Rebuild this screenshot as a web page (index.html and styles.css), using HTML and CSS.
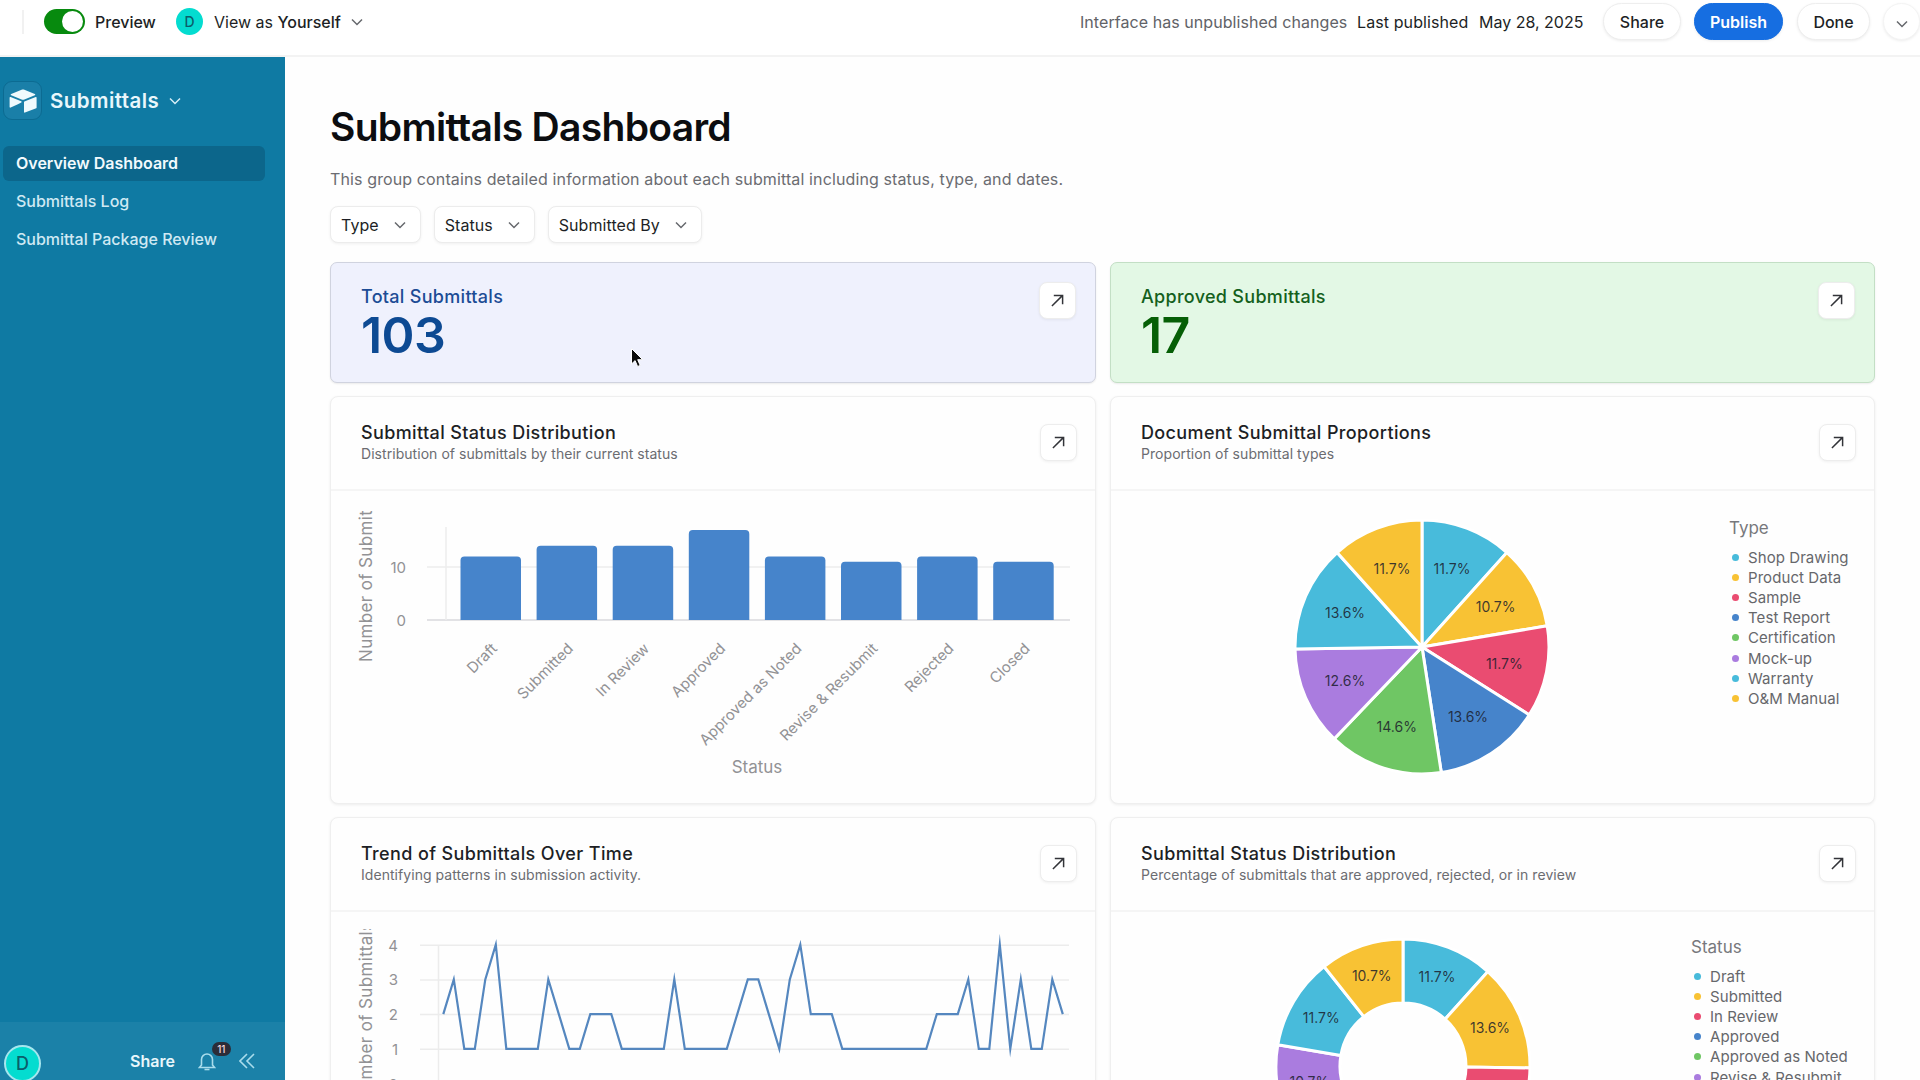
FILE: index.html
```
<!DOCTYPE html>
<html lang="en">
  <head>
    <meta charset="UTF-8" />
    <title>Submittals Dashboard</title>
    <link rel="stylesheet" href="styles.css">
  </head>
  <body>
    <header class="topbar">
      <span class="topbar-divider"></span>
      <span class="toggle"><span class="toggle-knob"></span></span>
      <span class="preview-label">Preview</span>
      <span class="avatar avatar-small">D</span>
      <span class="view-as">View as <b>Yourself</b></span>
      <svg class="chevron view-chevron" viewBox="0 0 12 8"><path d="M1 1.5l5 5 5-5" /></svg>
      <div class="topbar-right">
        <span class="unpublished">Interface has unpublished changes</span>
        <span class="last-published">Last published</span>
        <span class="publish-date">May 28, 2025</span>
        <button class="pill pill-share">Share</button>
        <button class="pill pill-publish">Publish</button>
        <button class="pill pill-done">Done</button>
        <button class="pill pill-more"><svg class="chevron" viewBox="0 0 12 8"><path d="M1 1.5l5 5 5-5" /></svg></button>
      </div>
    </header>

    <div class="layout">
      <aside class="sidebar">
        <div class="app-name">
          <span class="app-logo">
            <svg viewBox="0 0 28 24">
              <path d="M12.6.7L2.2 5c-.6.2-.6 1 0 1.300l10.400 4.100c.9.4 1.900.4 2.800 0l10.400-4.100c.6-.2.6-1 0-1.300L15.400.7c-.9-.4-1.900-.4-2.800 0z" />
              <path d="M15 13v10c0 .5.500.8 1 .6l11.200-4.400c.3-.1.400-.3.400-.6V8.600c0-.5-.5-.8-.9-.6L15.400 12.400c-.2.1-.4.300-.4.600z" />
              <path d="M12.300 13.500L8.900 15.200 1.700 18.600c-.5.2-1.100-.1-1.100-.6V8.600c0-.500.500-.800 1-.6l10.600 4.200c.6.200.6 1 .1 1.300z" />
            </svg>
          </span>
          <span class="app-title">Submittals</span>
          <svg class="chevron" viewBox="0 0 12 8"><path d="M1 1.5l5 5 5-5" /></svg>
        </div>
        <nav class="nav">
          <a class="nav-item active">Overview Dashboard</a>
          <a class="nav-item">Submittals Log</a>
          <a class="nav-item">Submittal Package Review</a>
        </nav>
        <div class="sidebar-footer">
          <span class="avatar avatar-user">D</span>
          <span class="footer-share">Share</span>
          <span class="bell">
            <svg viewBox="0 0 18 20"><path d="M3.500 14V8.500a5.500 5.500 0 0 1 11 0V14l2 2.500h-15z" /><path d="M6.500 18.500h5" /></svg>
            <span class="badge">11</span>
          </span>
          <svg class="collapse" viewBox="0 0 16 16"><path d="M8 1L1 8l7 7M15 1L8 8l7 7" /></svg>
        </div>
      </aside>

      <main class="content">
        <h1 class="title">Submittals Dashboard</h1>
        <p class="description">This group contains detailed information about each submittal including status, type, and dates.</p>

        <div class="filters">
          <button class="filter">Type <svg class="chevron" viewBox="0 0 12 8"><path d="M1 1.5l5 5 5-5" /></svg></button>
          <button class="filter">Status <svg class="chevron" viewBox="0 0 12 8"><path d="M1 1.5l5 5 5-5" /></svg></button>
          <button class="filter">Submitted By <svg class="chevron" viewBox="0 0 12 8"><path d="M1 1.5l5 5 5-5" /></svg></button>
        </div>

        <div class="cards">
          <section class="kpi kpi-blue">
            <div>
              <div class="kpi-label">Total Submittals</div>
              <div class="kpi-value">103</div>
            </div>
            <button class="expand"><svg viewBox="0 0 14 14"><path d="M1 13L12.500 1.500M3 1.500h9.500V11" /></svg></button>
          </section>
          <section class="kpi kpi-green">
            <div>
              <div class="kpi-label">Approved Submittals</div>
              <div class="kpi-value">17</div>
            </div>
            <button class="expand"><svg viewBox="0 0 14 14"><path d="M1 13L12.500 1.500M3 1.500h9.500V11" /></svg></button>
          </section>

          <section class="card">
            <div class="card-header">
              <div>
                <h2>Submittal Status Distribution</h2>
                <p>Distribution of submittals by their current status</p>
              </div>
              <button class="expand"><svg viewBox="0 0 14 14"><path d="M1 13L12.500 1.500M3 1.500h9.500V11" /></svg></button>
            </div>
            <svg class="chart" id="barChart" width="764" height="312"></svg>
          </section>

          <section class="card">
            <div class="card-header">
              <div>
                <h2>Document Submittal Proportions</h2>
                <p>Proportion of submittal types</p>
              </div>
              <button class="expand"><svg viewBox="0 0 14 14"><path d="M1 13L12.500 1.500M3 1.500h9.500V11" /></svg></button>
            </div>
            <div class="pie-body">
              <svg class="pie pie-type" id="typePie" viewBox="-128 -128 256 256"></svg>
              <div class="legend legend-type">
                <h3>Type</h3>
                <ul id="typeLegend"></ul>
              </div>
            </div>
          </section>

          <section class="card">
            <div class="card-header">
              <div>
                <h2>Trend of Submittals Over Time</h2>
                <p>Identifying patterns in submission activity.</p>
              </div>
              <button class="expand"><svg viewBox="0 0 14 14"><path d="M1 13L12.500 1.500M3 1.500h9.500V11" /></svg></button>
            </div>
            <svg class="chart" id="lineChart" width="764" height="312"></svg>
          </section>

          <section class="card">
            <div class="card-header">
              <div>
                <h2>Submittal Status Distribution</h2>
                <p>Percentage of submittals that are approved, rejected, or in review</p>
              </div>
              <button class="expand"><svg viewBox="0 0 14 14"><path d="M1 13L12.500 1.500M3 1.500h9.500V11" /></svg></button>
            </div>
            <div class="pie-body">
              <svg class="pie pie-status" id="statusPie" viewBox="-128 -128 256 256"></svg>
              <div class="legend legend-status">
                <h3>Status</h3>
                <ul id="statusLegend"></ul>
              </div>
            </div>
          </section>
        </div>
      </main>
    </div>

    <svg class="cursor" viewBox="0 0 14 21"><path d="M1.500 1.500v15.500l3.600-3.400 2.500 5.900 2.600-1.100-2.500-5.700h5z" /></svg>

    <script src="charts.js"></script>
  </body>
</html>
```
FILE: styles.css
```
* {
  box-sizing: border-box;
}

body {
  margin: 0;
  height: 1080px;
  overflow: hidden;
  font-family: Inter, "Liberation Sans", sans-serif;
  font-size: 16px;
  color: #1d1f25;
  background-color: #fefefe;
}

button {
  font-family: inherit;
  color: inherit;
}

h1,
h2,
h3,
p,
ul {
  margin: 0;
  padding: 0;
}

.chevron {
  width: 12px;
  height: 8px;
  flex: none;
  fill: none;
  stroke: #66686d;
  stroke-width: 1.5;
}

/* top bar */
.topbar {
  display: flex;
  align-items: center;
  height: 57px;
  padding: 0 0 12px 22px;
  border-bottom: 2px solid #f3f3f3;
  background-color: #fff;
  white-space: nowrap;
}

.topbar-divider {
  width: 2px;
  height: 24px;
  margin-right: 20px;
  background-color: #f1f1f1;
}

.toggle {
  display: flex;
  justify-content: flex-end;
  width: 41px;
  height: 25px;
  padding: 2px;
  border-radius: 13px;
  background-color: #078a0e;
}

.toggle-knob {
  width: 21px;
  height: 21px;
  border-radius: 50%;
  background-color: #fff;
}

.preview-label {
  width: 82px;
  padding-left: 10px;
  font-weight: 500;
}

.avatar {
  display: flex;
  align-items: center;
  justify-content: center;
  flex: none;
  border-radius: 50%;
  background-color: #04dcd0;
  color: #0b5e6b;
}

.avatar-small {
  width: 27px;
  height: 27px;
  margin-left: 9px;
  font-size: 14px;
  font-weight: 500;
}

.view-as {
  width: 128px;
  margin-left: 11px;
}

.view-as b {
  font-weight: 500;
}

.view-chevron {
  margin-left: 9px;
}

.topbar-right {
  display: flex;
  align-items: center;
  margin-left: auto;
}

.unpublished {
  width: 277px;
  letter-spacing: 0.06px;
  color: #616267;
}

.last-published {
  width: 122px;
  letter-spacing: 0.1px;
}

.publish-date {
  width: 124px;
}

.pill {
  height: 37px;
  padding: 0;
  border: 1px solid #eeeeee;
  border-radius: 19px;
  background-color: #fff;
  box-shadow: 0 1px 3px rgba(0, 0, 0, 0.08);
  font-size: 16px;
  font-weight: 500;
}

.pill-share {
  width: 78px;
  margin-right: 13px;
}

.pill-publish {
  width: 89px;
  margin-right: 14px;
  border-color: #166ee1;
  background-color: #166ee1;
  color: #fff;
  font-weight: 600;
}

.pill-done {
  width: 73px;
  margin-right: 13px;
}

.pill-more {
  width: 37px;
  border-color: #f4f4f4;
}

/* sidebar */
.layout {
  display: flex;
  height: 1023px;
}

.sidebar {
  display: flex;
  flex-direction: column;
  flex: none;
  width: 285px;
  background-color: #0f7aa3;
  color: #e9f7fc;
}

.app-name {
  display: flex;
  align-items: center;
  height: 39px;
  margin: 24px 0 0 3px;
}

.app-name .chevron {
  margin-left: 8px;
  stroke: #d5edf6;
}

.app-logo {
  display: flex;
  align-items: center;
  justify-content: center;
  width: 39px;
  height: 39px;
  border: 1px solid #0c6b92;
  border-radius: 9px;
  background-color: #1a7fa8;
}

.app-logo svg {
  width: 28px;
  height: 24px;
  fill: #f0fafd;
}

.app-title {
  width: 111px;
  margin-left: 8px;
  font-size: 20.5px;
  font-weight: 600;
  letter-spacing: 0.45px;
}

.nav {
  display: flex;
  flex-direction: column;
  gap: 3px;
  margin: 26px 20px 0 3px;
}

.nav-item {
  height: 35px;
  padding-left: 13px;
  border-radius: 6px;
  font-weight: 500;
  line-height: 34px;
  color: #cfe9f3;
}

.nav-item.active {
  background-color: #0c668b;
  color: #f2fafd;
  font-weight: 600;
}

.sidebar-footer {
  display: flex;
  align-items: center;
  height: 58px;
  margin-top: auto;
  padding: 20px 0 0 4px;
  background-color: #1b81a8;
}

.avatar-user {
  width: 37px;
  height: 37px;
  margin-top: 4px;
  border: 2px solid #a5e6ee;
  font-size: 18px;
  font-weight: 500;
}

.footer-share {
  margin-left: 89px;
  font-weight: 600;
}

.bell {
  position: relative;
  display: flex;
  margin-left: 23px;
}

.bell svg,
.collapse {
  width: 18px;
  height: 20px;
  fill: none;
  stroke: #a9dcec;
  stroke-width: 1.6;
}

.collapse {
  width: 16px;
  height: 16px;
  margin-left: 23px;
}

.badge {
  position: absolute;
  top: -9px;
  left: 14px;
  width: 19px;
  height: 14px;
  border-radius: 7px;
  background-color: #2b2c38;
  color: #f3d9dc;
  font-size: 10px;
  font-weight: 500;
  line-height: 14px;
  text-align: center;
}

/* main content */
.content {
  flex: 1;
  padding: 46px 45px 0 45px;
}

.title {
  font-size: 39px;
  font-weight: 600;
  line-height: 48px;
  letter-spacing: -0.7px;
  color: #0c0d10;
}

.description {
  margin-top: 18px;
  font-size: 16px;
  line-height: 20px;
  letter-spacing: 0.12px;
  color: #6b6c71;
}

.filters {
  display: flex;
  gap: 13px;
  margin-top: 17px;
}

.filter {
  display: flex;
  align-items: center;
  gap: 15px;
  height: 37px;
  padding: 0 14px 0 10px;
  border: 1px solid #ececec;
  border-radius: 8px;
  background-color: #fff;
  box-shadow: 0 1px 3px rgba(0, 0, 0, 0.06);
  font-size: 16px;
  letter-spacing: 0.06px;
}

.cards {
  display: grid;
  grid-template-columns: 766px 765px;
  grid-template-rows: 121px 408px 408px;
  gap: 13px 14px;
  margin-top: 19px;
}

.kpi {
  display: flex;
  justify-content: space-between;
  padding: 19px 19px 0 30px;
  border: 1px solid #d0d3df;
  border-radius: 7px;
  box-shadow: 0 1px 2px rgba(0, 0, 0, 0.08);
}

.kpi-blue {
  background-color: #eff1fd;
  color: #1c4c95;
}

.kpi-green {
  border-color: #c3dfc5;
  background-color: #e3f8e5;
  color: #14601c;
}

.kpi-label {
  margin-top: 4px;
  font-size: 18px;
  font-weight: 500;
  line-height: 22px;
  letter-spacing: 0.3px;
}

.kpi-value {
  font-size: 50px;
  font-weight: 600;
  line-height: 54px;
  letter-spacing: -0.6px;
}

.kpi-blue .kpi-value {
  color: #0d4a93;
}

.kpi-green .kpi-value {
  color: #065f06;
}

.expand {
  display: flex;
  align-items: center;
  justify-content: center;
  flex: none;
  width: 37px;
  height: 37px;
  border: 1px solid #ededed;
  border-radius: 8px;
  background-color: #fff;
  box-shadow: 0 1px 3px rgba(0, 0, 0, 0.06);
}

.expand svg {
  width: 13px;
  height: 13px;
  flex: none;
  fill: none;
  stroke: #333439;
  stroke-width: 1.6;
}

.card {
  overflow: hidden;
  border: 1px solid #efefef;
  border-radius: 8px;
  background-color: #fefefe;
  box-shadow: 0 1px 3px rgba(0, 0, 0, 0.07);
}

.card-header {
  display: flex;
  justify-content: space-between;
  height: 94px;
  padding: 27px 18px 0 30px;
  border-bottom: 2px solid #f5f5f5;
}

.card-header h2 {
  margin-top: -2px;
  font-size: 18px;
  font-weight: 500;
  line-height: 22px;
  letter-spacing: 0.37px;
}

.card-header p {
  font-size: 14px;
  line-height: 20px;
  letter-spacing: 0.05px;
  color: #6b6c71;
}

/* charts */
.chart {
  display: block;
}

.chart text {
  font-size: 15px;
  fill: #929295;
}

.chart .axis-title {
  font-size: 17px;
}

.grid-line {
  stroke: #ececec;
  stroke-width: 1.5;
}

.axis-line {
  stroke: #d9d9dc;
  stroke-width: 1.5;
}

.bar {
  fill: #4684cb;
}

.trend {
  fill: none;
  stroke: #5587bf;
  stroke-width: 2.2;
  stroke-miterlimit: 12;
}

.pie-body {
  display: flex;
}

.pie {
  flex: none;
  width: 256px;
  height: 256px;
}

.pie path {
  stroke: #fff;
  stroke-width: 3;
}

.pie text {
  font-size: 14px;
  fill: #1b1d2b;
  fill-opacity: 0.85;
  text-anchor: middle;
}

.pie-type {
  margin: 28px 0 0 183px;
}

.pie-status {
  margin: 26px 0 0 164px;
}

.legend {
  white-space: nowrap;
}

.legend-type {
  margin: 26px 0 0 179px;
}

.legend-status {
  margin: 24px 0 0 160px;
}

.legend h3 {
  font-size: 17px;
  font-weight: 400;
  line-height: 22px;
  color: #77787c;
}

.legend ul {
  margin-top: 8px;
  padding-left: 3px;
  list-style: none;
}

.legend li {
  display: flex;
  align-items: center;
  gap: 9px;
  height: 20.2px;
  font-size: 15px;
  letter-spacing: 0.07px;
  color: #66676b;
}

.dot {
  width: 7px;
  height: 7px;
  border-radius: 50%;
}

/* mouse pointer over the page */
.cursor {
  position: absolute;
  left: 630px;
  top: 347px;
  width: 14px;
  height: 21px;
  fill: #0b0b0b;
  stroke: #fff;
  stroke-width: 1;
}
```
FILE: charts.js
```
const colors = ["#48bbdb", "#f8c234", "#ea4c71", "#4684cb", "#6fc664", "#aa7cdf"];

const statuses = [
  { name: "Draft", count: 12 },
  { name: "Submitted", count: 14 },
  { name: "In Review", count: 14 },
  { name: "Approved", count: 17 },
  { name: "Approved as Noted", count: 12 },
  { name: "Revise & Resubmit", count: 11 },
  { name: "Rejected", count: 12 },
  { name: "Closed", count: 11 },
];

const types = [
  { name: "Shop Drawing", count: 12 },
  { name: "Product Data", count: 11 },
  { name: "Sample", count: 12 },
  { name: "Test Report", count: 14 },
  { name: "Certification", count: 15 },
  { name: "Mock-up", count: 13 },
  { name: "Warranty", count: 14 },
  { name: "O&M Manual", count: 12 },
];

const trend = [
  2, 3, 1, 1, 3, 4, 1, 1, 1, 1, 3, 2, 1, 1, 2, 2, 2, 1, 1, 1,
  1, 1, 3, 1, 1, 1, 1, 1, 2, 3, 3, 2, 1, 3, 4, 2, 2, 2, 1, 1,
  1, 1, 1, 1, 1, 1, 1, 2, 2, 2, 3, 1, 1, 4, 1, 3, 1, 1, 3, 2,
];

function add(parent, tag, attrs, text) {
  const el = document.createElementNS("http://www.w3.org/2000/svg", tag);
  for (const key in attrs) el.setAttribute(key, attrs[key]);
  if (text) el.textContent = text;
  parent.appendChild(el);
  return el;
}

function line(svg, cls, x1, y1, x2, y2) {
  add(svg, "line", { class: cls, x1, y1, x2, y2 });
}

// vertical axis title, cut off above y = top
function sideTitle(svg, start, top, length) {
  const box = add(svg, "svg", { x: 20, y: top, width: 30, height: 312 - top });
  add(box, "text", {
    class: "axis-title",
    transform: `translate(21 ${start - top}) rotate(-90)`,
    textLength: length,
  }, "Number of Submittals");
}

function drawBars() {
  const svg = document.getElementById("barChart");
  const base = 129;
  sideTitle(svg, 171, 20, 181);
  [0, 10].forEach((v) => {
    const y = base - v * 5.3;
    line(svg, v ? "grid-line" : "axis-line", 96, y, 739, y);
    add(svg, "text", { x: 75, y: y + 5.5, "text-anchor": "end" }, String(v));
  });
  line(svg, "grid-line", 115, 36, 115, base);
  statuses.forEach((s, i) => {
    const x = 129.5 + i * 76.1;
    const h = s.count * 5.3;
    const w = 60.5;
    add(svg, "path", {
      class: "bar",
      d: `M${x} ${base}v${4 - h}q0 -4 4 -4h${w - 8}q4 0 4 4v${h - 4}z`,
    });
    add(svg, "text", {
      "text-anchor": "end",
      transform: `translate(${x + 37.5} 158.5) rotate(-45)`,
    }, s.name);
  });
  add(svg, "text", { class: "axis-title", x: 426, y: 282, "text-anchor": "middle" }, "Status");
}

function drawTrend() {
  const svg = document.getElementById("lineChart");
  const yOf = (v) => 172 - v * 34.7;
  sideTitle(svg, 191, 17, 181);
  for (let v = 0; v <= 4; v++) {
    line(svg, "grid-line", 89, yOf(v), 738, yOf(v));
    add(svg, "text", { x: 67, y: yOf(v) + 5.5, "text-anchor": "end" }, String(v));
  }
  line(svg, "grid-line", 107.5, yOf(4), 107.5, yOf(0));
  const points = trend.map((v, i) => `${112.3 + i * 10.5},${yOf(v) - 0.5}`).join(" ");
  add(svg, "polyline", { class: "trend", points });
}

function drawPie(id, data, inner, labelRadius) {
  const svg = document.getElementById(id);
  const r = 127;
  const total = data.reduce((sum, d) => sum + d.count, 0);
  const at = (angle, radius) =>
    `${(Math.sin(angle) * radius).toFixed(2)} ${(-Math.cos(angle) * radius).toFixed(2)}`;
  let start = 0;
  data.forEach((d, i) => {
    const end = start + (d.count / total) * Math.PI * 2;
    const mid = (start + end) / 2;
    const hole = inner ? `L${at(end, inner)}A${inner} ${inner} 0 0 0 ${at(start, inner)}` : "L0 0";
    add(svg, "path", {
      fill: colors[i % colors.length],
      d: `M${at(start, inner)}L${at(start, r)}A${r} ${r} 0 0 1 ${at(end, r)}${hole}Z`,
    });
    add(svg, "text", {
      x: Math.sin(mid) * labelRadius,
      y: -Math.cos(mid) * labelRadius + 5,
    }, ((d.count / total) * 100).toFixed(1) + "%");
    start = end;
  });
}

function drawLegend(id, data) {
  const list = document.getElementById(id);
  data.forEach((d, i) => {
    const item = document.createElement("li");
    const dot = document.createElement("span");
    dot.className = "dot";
    dot.style.backgroundColor = colors[i % colors.length];
    item.append(dot, d.name);
    list.appendChild(item);
  });
}

drawBars();
drawTrend();
drawPie("typePie", types, 0, 84);
drawPie("statusPie", statuses, 63, 95);
drawLegend("typeLegend", types);
drawLegend("statusLegend", statuses);
```
